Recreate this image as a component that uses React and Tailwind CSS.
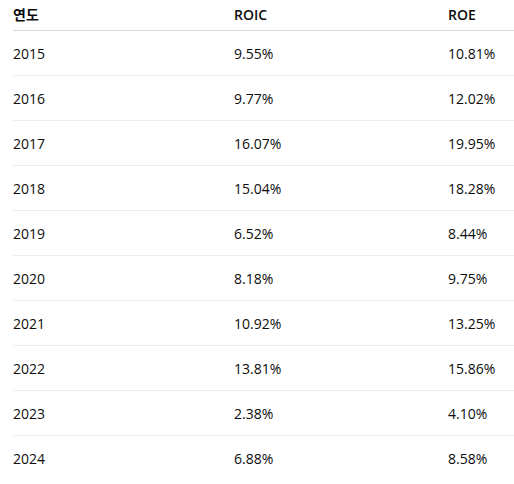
import React from "react";

const rows = [
  ["2015", "9.55%", "10.81%"],
  ["2016", "9.77%", "12.02%"],
  ["2017", "16.07%", "19.95%"],
  ["2018", "15.04%", "18.28%"],
  ["2019", "6.52%", "8.44%"],
  ["2020", "8.18%", "9.75%"],
  ["2021", "10.92%", "13.25%"],
  ["2022", "13.81%", "15.86%"],
  ["2023", "2.38%", "4.10%"],
  ["2024", "6.88%", "8.58%"],
];

const App = () => {
  return (
    <div
      className="w-[514px] h-[484px] bg-white overflow-hidden pl-[13px] text-[14px] text-[#0d0d0d]"
      style={{ fontFamily: '"Segoe UI", "Open Sans", "Noto Sans CJK KR", sans-serif' }}
    >
      {/* header */}
      <div className="grid grid-cols-[221px_214px_1fr] h-[31px] items-center border-b border-[#d9d9d9] font-semibold pb-[2px]">
        <div>연도</div>
        <div>ROIC</div>
        <div>ROE</div>
      </div>

      {rows.map((r, i) => (
        <div
          key={r[0]}
          className={`grid grid-cols-[221px_214px_1fr] h-[45px] items-center ${
            i < rows.length - 1 ? "border-b border-[#ececec]" : ""
          }`}
        >
          <div>{r[0]}</div>
          <div>{r[1]}</div>
          <div>{r[2]}</div>
        </div>
      ))}
    </div>
  );
};

export default App;
